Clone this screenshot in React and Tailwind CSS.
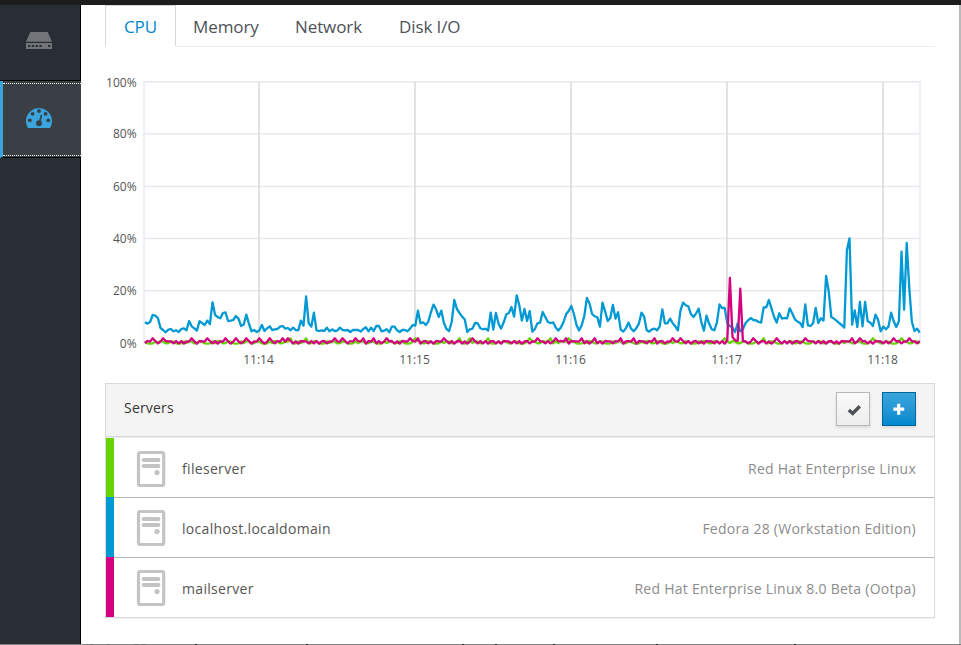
import React from "react";

// Each entry is one sample; stored as distance in 1/3 px below the y=280 line.
const LOCALHOST = [
  126, 130, 125, 104, 106, 113, 143, 149, 156, 148, 146, 153, 150, 155, 146, 144, 150, 122, 138, 144,
  151, 123, 128, 134, 121, 131, 66, 104, 110, 114, 98, 96, 122, 121, 119, 107, 115, 137, 133, 103,
  130, 153, 149, 155, 151, 134, 152, 144, 138, 149, 147, 146, 139, 137, 145, 143, 150, 142, 149, 150,
  121, 136, 48, 129, 139, 97, 150, 152, 150, 152, 142, 153, 147, 152, 151, 142, 149, 150, 149, 155,
  149, 149, 149, 154, 146, 141, 153, 142, 152, 137, 137, 153, 151, 147, 156, 139, 139, 150, 155, 149,
  149, 153, 145, 134, 136, 91, 129, 126, 134, 124, 96, 73, 87, 110, 91, 128, 146, 152, 125, 59,
  86, 98, 109, 117, 155, 147, 145, 128, 129, 144, 147, 145, 151, 97, 148, 98, 130, 145, 126, 102,
  98, 80, 109, 45, 75, 121, 86, 122, 92, 154, 146, 129, 127, 95, 110, 125, 128, 126, 142, 151,
  142, 125, 102, 92, 77, 101, 134, 151, 135, 107, 53, 70, 101, 108, 111, 139, 67, 93, 122, 113,
  74, 115, 96, 148, 154, 144, 127, 145, 153, 144, 130, 97, 109, 150, 154, 147, 145, 150, 138, 87,
  129, 129, 115, 129, 138, 150, 90, 67, 75, 78, 101, 110, 99, 85, 125, 151, 106, 130, 147, 150,
  127, 72, 83, 83, 130, 137, 142, 155, 129, 153, 147, 129, 120, 113, 119, 120, 125, 127, 81, 81,
  59, 84, 110, 127, 99, 115, 113, 114, 84, 100, 117, 124, 128, 140, 72, 135, 137, 129, 83, 128,
  114, 121, -13, 32, 110, 115, 121, 128, 134, 142, -90, -126, 133, 90, 140, 65, 138, 65, 123, 127,
  137, 103, 119, 153, 139, 147, 139, 97, 123, 140, 122, -86, 88, -112, 25, 125, 152, 145, 157,
];

// Idle machines hover between 0% and 2%, with a short peak at the listed samples.
const idle = (peaks, wave, extra = {}) =>
  LOCALHOST.map((_, i) => {
    if (extra[i] !== undefined) return extra[i];
    if (peaks.includes(i)) return 174;
    if (peaks.includes(i + 1)) return 184;
    return wave[i % wave.length];
  });

const MAIL = idle(
  [3, 7, 18, 24, 31, 35, 39, 44, 48, 53, 55, 73, 76, 81, 84, 88, 93, 102, 105, 115, 126, 151, 158, 162,
    168, 173, 183, 188, 196, 203, 206, 234, 243, 254, 272, 275, 288, 294],
  [189, 182, 190, 183, 182, 189, 183, 190, 182, 183, 183, 189, 182],
  { 0: 188, 224: 180, 225: -7, 226: 170, 227: 180, 228: 182, 229: 25, 230: 182 }
);
const FILES = idle(
  [56, 62, 104, 121, 125, 132, 148, 156, 163, 223, 238, 280, 291],
  [184, 189, 190, 189, 183, 188, 182, 184, 189, 188, 183]
);

const line = (data) =>
  data.map((v, i) => `${(144.9 + i * 2.6).toFixed(1)},${(280.3 + v / 3).toFixed(1)}`).join(" ");

const Y_TICKS = [["100%", 81.7], ["80%", 133.7], ["60%", 186.5], ["40%", 238.5], ["20%", 290.7], ["0%", 343.5]];
const X_TICKS = [["11:14", 259], ["11:15", 415], ["11:16", 571], ["11:17", 727], ["11:18", 883]];

function Chart() {
  return (
    <svg viewBox="105 47 830 336" className="block h-[336px] w-[830px]">
      {Y_TICKS.map(([t, y]) => (
        <g key={t}>
          <path d={`M143.5 ${y}H920.5`} stroke="#e7e9ee" strokeWidth="1.4" />
          <text x="136.6" y={y < 100 ? 87 : Math.floor(y) + 5} textAnchor="end" className="fill-[#545454] text-[12px]">{t}</text>
        </g>
      ))}
      <path d="M144 81V344M920 81V344" stroke="#e9ecf2" strokeWidth="1.6" />
      {X_TICKS.map(([t, x]) => (
        <g key={t}>
          <path d={`M${x} 82V343`} stroke="#d9d9d9" strokeWidth="1.5" />
          <text x={x - 0.5} y="364" textAnchor="middle" className="fill-[#545454] text-[12px]">{t}</text>
        </g>
      ))}
      <g fill="none" strokeWidth="2.3" strokeLinejoin="round">
        <polyline points={line(FILES)} stroke="#66d400" />
        <polyline points={line(LOCALHOST)} stroke="#0099d3" />
        <polyline points={line(MAIL)} stroke="#d4007f" />
      </g>
    </svg>
  );
}

function ServerIcon() {
  return (
    <svg viewBox="0 0 30 38" className="h-[38px] w-[30px]">
      <rect x="2.5" y="2.5" width="25.2" height="33" rx="1.8" fill="#fff" stroke="#c4c4c4" strokeWidth="3.2" />
      <path d="M7.5 10H22.5M7.5 16H22.5" stroke="#c4c4c4" strokeWidth="3.8" strokeLinecap="round" />
      <circle cx="21" cy="22.6" r="2.6" fill="#c4c4c4" />
    </svg>
  );
}

function Row({ name, os, bar, divider, height, icon }) {
  return (
    <div className={`flex ${height}`}>
      <div className={`w-2 ${bar}`} />
      <div className={`flex flex-1 items-center pt-[2px] pl-[22px] pr-[18px] ${divider}`}>
        <div className={icon}>
          <ServerIcon />
        </div>
        <span className="ml-4 text-[14px] tracking-[0.32px] text-[#555]">{name}</span>
        <span className="ml-auto text-[14px] tracking-[0.26px] text-[#8c8c8c]">{os}</span>
      </div>
    </div>
  );
}

export default function App() {
  return (
    <div className="flex h-[645px] w-[961px] flex-col overflow-hidden bg-white font-['Open_Sans',sans-serif]">
      <div className="h-[5px] shrink-0 bg-[#1d1d1d]" />
      <div className="flex h-[639px] shrink-0">
        <nav className="flex w-[81px] flex-col bg-[#292e34]">
          <div className="flex h-[76px] items-start border-r border-b border-black pt-[27px] pl-[26px]">
            <svg viewBox="0 0 26 17" className="h-[17px] w-[26px]">
              <path d="M4.3 0H21.7L26 9.7H0Z" fill="#72767b" />
              <path d="M0 11H26V17H0Z" fill="#72767b" />
              <path d="M2 14H16M22 14H24.5" stroke="#292e34" strokeWidth="2.2" strokeDasharray="2.3 1.5" />
            </svg>
          </div>
          <div className="h-[77px] border-b border-l-[3px] border-b-black border-l-[#39a5dc] bg-[#393f44] py-[2px]">
            <div className="h-[73px] border-y border-dotted border-white pt-[23px] pl-[23px]">
              <svg viewBox="0 0 26 21" className="h-[21px] w-[26px]">
                <path d="M2 21A13 13 0 1 1 24 21Z" fill="#39a5dc" />
                <g fill="#393f44">
                  <circle cx="3.8" cy="13.3" r="1.9" />
                  <circle cx="6.6" cy="6.8" r="1.9" />
                  <circle cx="13" cy="4" r="1.9" />
                  <circle cx="19.6" cy="6.8" r="1.9" />
                  <circle cx="22.3" cy="13.3" r="1.9" />
                  <circle cx="13" cy="16.2" r="2.9" />
                </g>
                <path d="M13.3 16L15.5 8" stroke="#393f44" strokeWidth="1.7" />
              </svg>
            </div>
          </div>
          <div className="flex-1 border-r border-black" />
        </nav>
        <main className="w-[878px] pl-6">
          <div className="flex h-[42px] w-[830px] text-[17px] leading-[43px] tracking-[-0.1px] text-[#4d5258]">
            <div className="h-[41px] w-[71px] border-x border-t border-[#d7d7d7] pl-[18px] leading-[42px] text-[#0088ce]">CPU</div>
            <div className="flex flex-1 border-b border-[#ececec]">
              <span className="w-[102px] pl-[17px]">Memory</span>
              <span className="w-[104px] pl-[17px]">Network</span>
              <span className="pl-[17px]">Disk I/O</span>
            </div>
          </div>
          <Chart />
          <section className="h-[235px] w-[830px] border border-[#dadada] shadow-[0_1px_1px_rgba(0,0,0,0.05)]">
            <header className="flex h-[54px] items-start border-b border-[#ececec] bg-[#f4f4f4] pr-[18px] pl-[18px] shadow-[inset_0_-1px_0_#d8d8d8]">
              <h2 className="pt-[13px] text-[14px] leading-[22px] tracking-[0.2px] text-[#363636]">Servers</h2>
              <button className="mt-2 ml-auto h-[34px] w-[34px] border border-[#b7b7b7] bg-linear-to-b from-[#fafafa] to-[#ededed] shadow-[0_2px_3px_rgba(3,3,3,0.1)]">
                <svg viewBox="0 0 32 32" className="size-8">
                  <path d="M11.8 16.9L15.7 20.5L22.8 13.2" fill="none" stroke="#4d5258" strokeWidth="3.4" />
                </svg>
              </button>
              <button className="mt-2 ml-3 h-[34px] w-[34px] border border-[#00659c] bg-linear-to-b from-[#39a5dc] to-[#0088ce] shadow-[0_2px_3px_rgba(3,3,3,0.1)]">
                <svg viewBox="0 0 32 32" className="size-8">
                  <path d="M10.3 16.2H21.2M15.7 10.7V21.7" stroke="#fff" strokeWidth="3.2" />
                </svg>
              </button>
            </header>
            <Row name="fileserver" os="Red Hat Enterprise Linux" bar="bg-[#66d400]" divider="" height="h-[59px]" icon="" />
            <Row name="localhost.localdomain" os="Fedora 28 (Workstation Edition)" bar="bg-[#0099d3]" divider="border-t border-[#b5b5b5]" height="h-[60px]" icon="pb-px" />
            <Row name="mailserver" os="Red Hat Enterprise Linux 8.0 Beta (Ootpa)" bar="bg-[#d4007f]" divider="border-t border-[#b5b5b5]" height="h-[60px]" icon="pb-px" />
          </section>
        </main>
        <div className="w-[2px] bg-[#bababa]" />
      </div>
      <svg viewBox="0 0 961 1" className="h-px w-full shrink-0">
        <path d="M0 0H961V1H0Z" fill="#858383" />
        <path d="M195 .5h2M306 .5h2M462 .5h2M495 .5h2M553 .5h2M656 .5h2M794 .5h2" stroke="#222" />
        <path d="M90 .5h3M107 .5h3M134 .5h5M141 .5h5" stroke="#6f6d6d" />
      </svg>
    </div>
  );
}
